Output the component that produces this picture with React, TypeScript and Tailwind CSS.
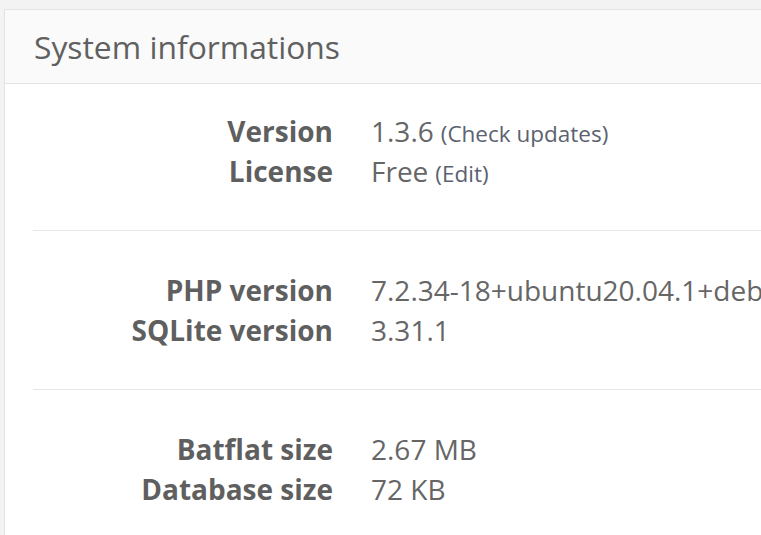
import React from 'react';

type Row = { label: string; value: string; note?: string };

const groups: Row[][] = [
    [
        { label: 'Version', value: '1.3.6', note: '(Check updates)' },
        { label: 'License', value: 'Free', note: '(Edit)' },
    ],
    [
        { label: 'PHP version', value: '7.2.34-18+ubuntu20.04.1+deb.sury.org+1' },
        { label: 'SQLite version', value: '3.31.1' },
    ],
    [
        { label: 'Batflat size', value: '2.67 MB' },
        { label: 'Database size', value: '72 KB' },
    ],
];

export default function App() {
    return (
        <div className="h-screen w-full overflow-hidden bg-[#f3f3f3] pt-[9px] pl-[4px] font-['Open_Sans',sans-serif] text-[#666]">
            <div className="w-[820px] h-[600px] border border-[#e3e3e3] bg-white">
                <div className="h-[74px] flex items-center px-[29px] bg-[#fafafa] border-b border-[#e3e3e3]">
                    <h3 className="text-[31.8px] text-[#606060]">System informations</h3>
                </div>
                <div className="pl-[28px] pt-[27px]">
                    {groups.map((g, i) => (
                        <div key={i}>
                            {i > 0 && <hr className="mt-[39px] mb-[39px] border-0 border-t border-[#e7e7e7]" />}
                            <dl>
                                {g.map((r) => (
                                    <div key={r.label} className="flex h-[40px] items-center whitespace-nowrap">
                                        <dt className="w-[300px] shrink-0 text-right font-bold text-[28px] text-[#5f5f5f]">{r.label}</dt>
                                        <dd className="ml-[38px] text-[28px] text-[#666]">
                                            {r.value}
                                            {r.note && <span className="ml-[7px] text-[22.5px] text-[#5b6270]">{r.note}</span>}
                                        </dd>
                                    </div>
                                ))}
                            </dl>
                        </div>
                    ))}
                </div>
            </div>
        </div>
    );
}
